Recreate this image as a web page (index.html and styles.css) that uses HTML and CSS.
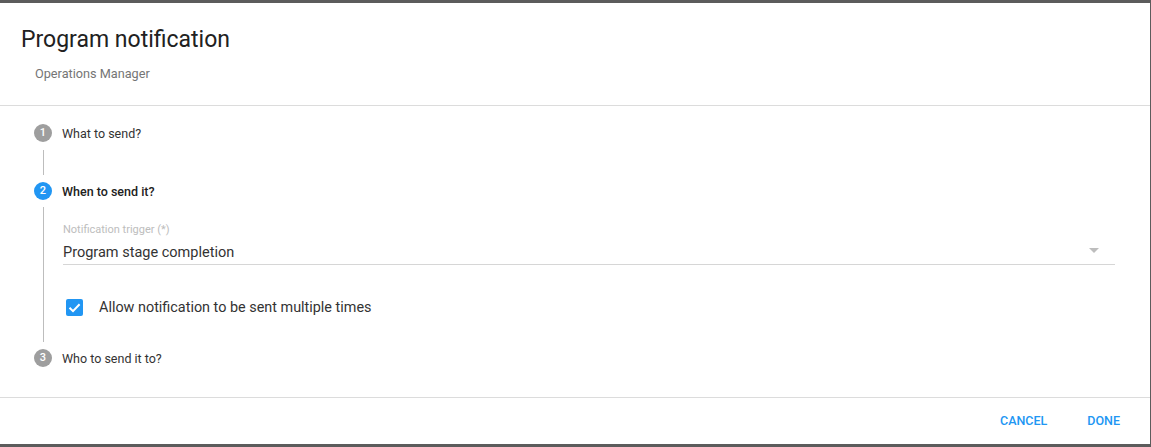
FILE: index.html
```html
<!DOCTYPE html>
<html lang="en">
<head>
    <meta charset="UTF-8">
    <meta name="viewport" content="width=device-width, initial-scale=1.0">
    <title>Program notification</title>
    <link rel="stylesheet" href="styles.css">
</head>
<body>
    <div class="dialog">
        <div class="dialog-header">
            <h2>Program notification</h2>
            <p class="subtitle">Operations Manager</p>
        </div>

        <div class="stepper">
            <div class="step">
                <span class="step-icon">1</span>
                <span class="step-label">What to send?</span>
            </div>
            <div class="connector"></div>

            <div class="step active">
                <span class="step-icon">2</span>
                <span class="step-label">When to send it?</span>
            </div>
            <div class="step-content">
                <div class="select-field">
                    <label>Notification trigger (*)</label>
                    <div class="select-value">
                        <span>Program stage completion</span>
                        <svg class="select-arrow" width="10" height="5" viewBox="0 0 10 5">
                            <path d="M0 0 L10 0 L5 5 Z" fill="#bdbdbd"/>
                        </svg>
                    </div>
                </div>
                <div class="checkbox-row">
                    <span class="checkbox">
                        <svg width="17" height="17" viewBox="0 0 17 17">
                            <path d="M3.5 8.8 L7 12.2 L13.6 5.2" fill="none" stroke="#fff" stroke-width="2"/>
                        </svg>
                    </span>
                    <span>Allow notification to be sent multiple times</span>
                </div>
            </div>

            <div class="step">
                <span class="step-icon">3</span>
                <span class="step-label">Who to send it to?</span>
            </div>
        </div>

        <div class="dialog-actions">
            <button type="button" class="flat-btn">Cancel</button>
            <button type="button" class="flat-btn">Done</button>
        </div>
    </div>
</body>
</html>
```

FILE: styles.css
```css
body {
    font-family: Roboto, 'Liberation Sans', sans-serif;
    margin: 0;
    padding: 0;
    background: #5c5c5c;
    color: #333;
}

.dialog {
    width: 1150px;
    height: 441px;
    margin-top: 3px;
    background-color: #fff;
    display: flex;
    flex-direction: column;
}

.dialog-header {
    padding: 21px 21px 23px;
    border-bottom: 1px solid #dcdcdc;
}

.dialog-header h2 {
    margin: 0;
    font-size: 23px;
    line-height: 32px;
    font-weight: 400;
    color: #212121;
}

.subtitle {
    margin: 10px 0 0 14px;
    font-size: 12.7px;
    line-height: 16px;
    color: #757575;
}

/* Vertical stepper */
.stepper {
    flex: 1;
    padding: 18px 35px 0 34px;
    border-bottom: 1px solid #dcdcdc;
}

.step {
    display: flex;
    align-items: center;
    height: 18px;
}

.step-icon {
    width: 18px;
    height: 18px;
    border-radius: 50%;
    background-color: #9e9e9e;
    color: #fff;
    font-size: 11px;
    font-weight: 500;
    line-height: 18px;
    text-align: center;
}

.step-label {
    margin-left: 10px;
    font-size: 12.5px;
    color: #333;
}

.step.active .step-icon {
    background-color: #2196f3;
}

.step.active .step-label {
    font-weight: 500;
    color: #212121;
}

.connector {
    margin: 8px 0 7px 9px;
    height: 25px;
    border-left: 1px solid #bdbdbd;
}

.step-content {
    margin: 7px 0 7px 9px;
    padding: 15px 0 23px 19px;
    border-left: 1px solid #bdbdbd;
}

.select-field label {
    display: block;
    font-size: 11px;
    line-height: 16px;
    color: #bdbdbd;
}

.select-value {
    display: flex;
    align-items: center;
    margin-top: 5px;
    padding-bottom: 1px;
    border-bottom: 1px solid #d6d6d6;
    font-size: 14.5px;
    line-height: 20px;
    color: #333;
}

.select-value span {
    flex: 1;
}

.select-arrow {
    margin: 0 16px 6px 0;
}

.checkbox-row {
    display: flex;
    align-items: center;
    height: 24px;
    margin-top: 30px;
    padding-left: 3px;
    font-size: 14.4px;
    color: #333;
}

.checkbox {
    width: 17px;
    height: 17px;
    border-radius: 2px;
    background-color: #2196f3;
    margin-right: 16px;
}

.checkbox svg {
    display: block;
}

.dialog-actions {
    height: 46px;
    display: flex;
    justify-content: flex-end;
    align-items: center;
    gap: 8px;
    padding-right: 14px;
}

.flat-btn {
    background: none;
    border: none;
    padding: 0 16px 2px;
    font-family: inherit;
    font-size: 12.5px;
    font-weight: 500;
    text-transform: uppercase;
    color: #2196f3;
    cursor: pointer;
}
```
